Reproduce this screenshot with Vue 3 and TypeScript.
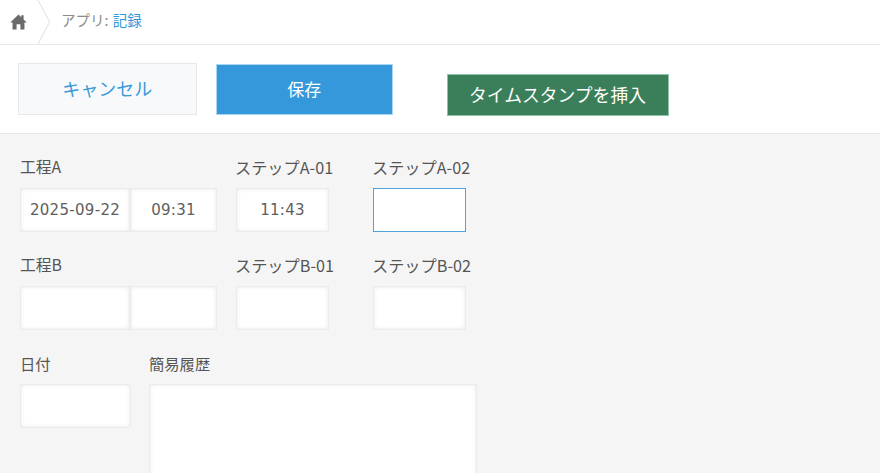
<script setup lang="ts">
interface Field {
  label: string;
  values: string[];
  focused?: boolean;
  wide?: boolean;
}

const rows: Field[][] = [
  [
    { label: '工程A', values: ['2025-09-22', '09:31'], wide: true },
    { label: 'ステップA-01', values: ['11:43'] },
    { label: 'ステップA-02', values: [''], focused: true },
  ],
  [
    { label: '工程B', values: ['', ''], wide: true },
    { label: 'ステップB-01', values: [''] },
    { label: 'ステップB-02', values: [''] },
  ],
];
</script>

<template>
  <div class="page">
    <header class="crumbs">
      <div class="home">
        <svg width="17" height="16" viewBox="0 0 16 15" aria-hidden="true">
          <path fill="#6b6b6b" d="M8 0.5 L10.6 3 V1.2 H12.8 V5.1 L15.8 8 H13.6 V14.5 H9.8 V9.6 H6.2 V14.5 H2.4 V8 H0.2 Z" />
        </svg>
      </div>
      <svg class="chevron" width="14" height="44" viewBox="0 0 14 44" aria-hidden="true">
        <path d="M1 0 L12.5 22 L1 44" fill="none" stroke="#e6e6e6" stroke-width="1.2" />
      </svg>
      <span class="crumb-text">アプリ: <span class="crumb-link">記録</span></span>
    </header>

    <div class="toolbar">
      <button class="btn cancel" type="button">キャンセル</button>
      <button class="btn save" type="button">保存</button>
      <button class="btn stamp" type="button">タイムスタンプを挿入</button>
    </div>

    <main class="form">
      <div v-for="(row, r) in rows" :key="r" class="row">
        <div v-for="f in row" :key="f.label" class="field" :class="{ wide: f.wide }">
          <div class="label">{{ f.label }}</div>
          <div class="inputs">
            <div
              v-for="(v, i) in f.values"
              :key="i"
              class="input"
              :class="{ focused: f.focused, first: f.wide && i === 0, second: f.wide && i === 1 }"
            >{{ v }}</div>
          </div>
        </div>
      </div>
      <div class="row last">
        <div class="field date">
          <div class="label">日付</div>
          <div class="input round"></div>
        </div>
        <div class="field history">
          <div class="label">簡易履歴</div>
          <div class="textarea"></div>
        </div>
      </div>
    </main>
  </div>
</template>

<style>
html, body { margin: 0; padding: 0; background: #f5f5f5; overflow: hidden; }
</style>

<style scoped>
.page {
  width: 880px;
  height: 473px;
  overflow: hidden;
  font-family: "Noto Sans CJK JP", "Noto Sans", sans-serif;
  color: #555;
  display: flex;
  flex-direction: column;
}
.crumbs {
  height: 44px;
  background: #fff;
  border-bottom: 1px solid #e8e8e8;
  display: flex;
  align-items: center;
  flex: none;
}
.home {
  width: 37px;
  display: flex;
  justify-content: center;
}
.chevron { flex: none; }
.crumb-text {
  margin-left: 10px;
  margin-bottom: 5px;
  font-size: 14.5px;
  color: #8c8c8c;
}
.crumb-link { color: #3498db; font-size: 14.5px; margin-left: 1px; }
.toolbar {
  height: 88px;
  background: #fff;
  border-bottom: 1px solid #e6e6e6;
  flex: none;
  display: flex;
  align-items: flex-start;
}
.btn {
  font-family: inherit;
  box-sizing: border-box;
  cursor: pointer;
  padding: 0 0 3px;
}
.cancel {
  margin: 18px 0 0 17.5px;
  width: 179.5px;
  height: 52px;
  background: #f7f9fa;
  border: 1px solid #e6e9ea;
  color: #3b9ad9;
  font-size: 18px;
}
.save {
  margin: 19px 0 0 18.5px;
  width: 177.5px;
  height: 51px;
  background: #3498db;
  border: 1px solid #a9d6f0;
  color: #fff;
  font-size: 17px;
}
.stamp {
  margin: 28.5px 0 0 53.5px;
  width: 222px;
  height: 42.5px;
  background: #3b7f5a;
  border: 1px solid #8fc4ab;
  color: #fff;
  font-size: 17.8px;
  padding-bottom: 1px;
}
.form {
  flex: 1;
  background: #f5f5f5;
  padding: 22px 0 0 20px;
}
.row {
  display: flex;
  height: 98px;
}
.field { width: 137px; }
.field.wide { width: 216px; }
.label {
  font-size: 15.8px;
  line-height: 22px;
  color: #555;
  white-space: nowrap;
  height: 22px;
  margin-bottom: 10px;
}
.field:not(.wide):not(.date):not(.history) .label {
  font-size: 16.2px;
  margin-left: -1px;
}
.row.last .label { font-size: 15.3px; }
.inputs { display: flex; }
.input {
  width: 93px;
  height: 44px;
  box-sizing: border-box;
  background: #fff;
  border: 1px solid #ebebeb;
  box-shadow: inset 0 0 4px rgba(0, 0, 0, 0.09);
  font-family: "DejaVu Sans", sans-serif;
  font-size: 15px;
  letter-spacing: 0.3px;
  color: #5e5e5e;
  display: flex;
  align-items: center;
  justify-content: center;
}
.input.first { width: 110px; }
.input.second { width: 87px; }
.input.focused {
  border: 1px solid #4fa3dc;
  box-shadow: none;
}
.input.round { width: 111px; border-radius: 2px; }
.row.last { height: auto; }
.field.date { width: 129px; }
.field.history { width: 328px; }
.textarea {
  width: 328px;
  height: 120px;
  box-sizing: border-box;
  background: #fff;
  border: 1px solid #ebebeb;
  box-shadow: inset 0 0 4px rgba(0, 0, 0, 0.09);
}
</style>
